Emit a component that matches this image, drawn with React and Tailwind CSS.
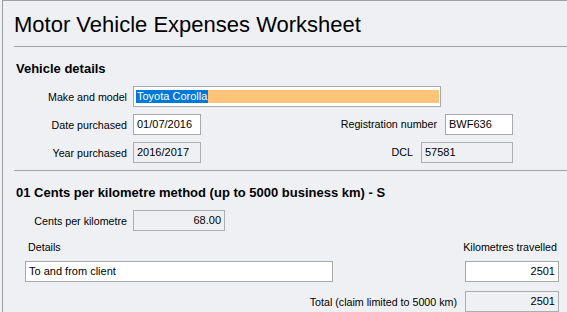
import React from 'react';

const Label = ({ children, className = '' }) => (
    <span className={`text-[10.7px] leading-[14px] text-black whitespace-nowrap ${className}`}>{children}</span>
);

const Box = ({ value, w, disabled, right, className = '' }) => (
    <div
        className={`h-[21px] ${w} flex items-center border px-[3px] text-[11px] text-black whitespace-nowrap overflow-hidden ${
            disabled ? 'border-[#adadad] bg-transparent' : 'border-[#a9a9a9] bg-white'
        } ${right ? 'justify-end' : ''} ${className}`}
    >
        {value}
    </div>
);

const Rule = ({ className = '' }) => <div className={`border-t border-[#a0a0a0] ${className}`} />;

const Heading = ({ children }) => (
    <h2 className="mt-[14px] ml-[2px] text-[13px] leading-[16px] font-bold text-black whitespace-nowrap">{children}</h2>
);

export default function App() {
    return (
        <div className="w-[567px] h-[312px] overflow-hidden bg-[#eff0f4] font-['Liberation_Sans',Arial,sans-serif]">
            <div className="ml-[2px] h-full border-l border-t border-[#a0a0a0] pl-[11px]">
                {/* Title */}
                <h1 className="pt-[11px] text-[22px] leading-[26px] text-black whitespace-nowrap">
                    Motor Vehicle Expenses Worksheet
                </h1>
                <Rule className="mt-[8px]" />

                {/* Vehicle details */}
                <Heading>Vehicle details</Heading>
                <div className="mt-[7px] w-[499px] flex flex-col gap-[4px]">
                    <div className="flex items-center">
                        <div className="w-[119px] pr-[6px] text-right"><Label>Make and model</Label></div>
                        <div className="h-[21px] w-[308px] border border-[#a9a9a9] bg-white pl-[2px] pr-px py-[3px]">
                            <div className="h-full bg-[#ffc477] flex items-center">
                                <span className="bg-[#0078d7] text-white text-[11px] leading-[13px] px-px">Toyota Corolla</span>
                            </div>
                        </div>
                    </div>
                    <div className="flex items-center">
                        <div className="w-[119px] pr-[6px] text-right"><Label>Date purchased</Label></div>
                        <Box value="01/07/2016" w="w-[68px]" />
                        <div className="ml-auto flex items-center">
                            <Label>Registration number</Label>
                            <Box value="BWF636" w="w-[68px]" className="ml-[8px]" />
                        </div>
                    </div>
                    <div className="flex items-center">
                        <div className="w-[119px] pr-[6px] text-right"><Label>Year purchased</Label></div>
                        <Box value="2016/2017" w="w-[68px]" disabled />
                        <div className="ml-auto flex items-center">
                            <Label>DCL</Label>
                            <Box value="57581" w="w-[92px]" disabled className="ml-[8px]" />
                        </div>
                    </div>
                </div>
                <Rule className="mt-[6px]" />

                {/* Cents per km */}
                <Heading>01 Cents per kilometre method (up to 5000 business km) - S</Heading>
                <div className="mt-[7px] flex items-center">
                    <div className="w-[119px] pr-[6px] text-right"><Label>Cents per kilometre</Label></div>
                    <Box value="68.00" w="w-[92px]" disabled right />
                </div>

                <div className="mt-[8px] ml-[11px] w-[534px] flex items-center justify-between">
                    <Label className="ml-[3px]">Details</Label>
                    <Label className="mr-[2px]">Kilometres travelled</Label>
                </div>
                <div className="mt-[7px] ml-[11px] w-[534px] flex items-center justify-between">
                    <Box value="To and from client" w="w-[308px]" />
                    <Box value="2501" w="w-[94px]" right />
                </div>
                <div className="mt-[9px] ml-[11px] w-[534px] flex items-center justify-end">
                    <Label>Total (claim limited to 5000 km)</Label>
                    <Box value="2501" w="w-[94px]" disabled right className="ml-[8px]" />
                </div>
                <Rule className="mt-[6px]" />
            </div>
        </div>
    );
}
